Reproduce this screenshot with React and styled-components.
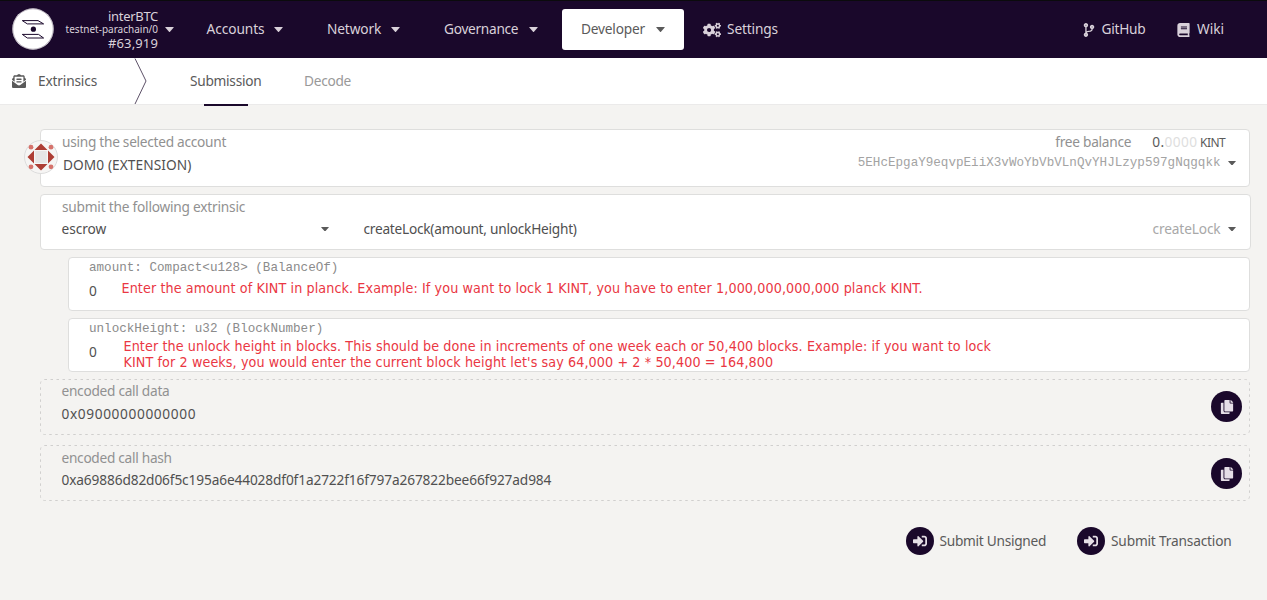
import React from 'react';
import styled, { createGlobalStyle } from 'styled-components';
import { FaEnvelopeOpenText, FaCodeBranch, FaBook, FaCogs, FaCopy, FaSignInAlt } from 'react-icons/fa';

const Global = createGlobalStyle`
  * { box-sizing: border-box; }
  body {
    margin: 0;
    background: #f4f3f1;
    color: #5a5a5a;
    font-family: "Noto Sans", sans-serif;
    font-size: 13.7px;
    line-height: 18px;
  }
`;

const Text = styled.span`
  display: block;
  flex: none;
  white-space: pre;
  width: ${p => (p.$w ? `${p.$w}px` : 'auto')};
  letter-spacing: ${p => p.$ls || 0}px;
  font-size: ${p => p.$size || 13.7}px;
`;

const Label = styled(Text)`
  color: #919191;
`;

const Faint = styled(Text)`
  color: #a8a8a8;
`;

const Mono = styled.span`
  display: block;
  flex: none;
  white-space: pre;
  font-family: "Liberation Mono", monospace;
  font-size: 12.6px;
  color: ${p => p.$color || '#8b8b8b'};
`;

const Header = styled.header`
  display: flex;
  align-items: center;
  height: 58px;
  padding: 1px 43px 0 12px;
  background: #1a082b;
  box-shadow: inset 0 1px #0b0b0d;
  color: #d9d1da;
`;

const Logo = styled.svg`
  flex: none;
  width: 42px;
  height: 42px;
  margin-bottom: 1px;
`;

const Chain = styled.div`
  display: flex;
  flex-direction: column;
  align-items: flex-end;
  width: 104px;
  margin-right: 7px;
  margin-top: 1px;
  line-height: 13.6px;
`;

const CaretSvg = styled.svg`
  flex: none;
  display: block;
  width: ${p => p.$size || 9}px;
  height: ${p => (p.$size || 9) * 0.55}px;
  fill: currentColor;
`;

const NavItem = styled.div`
  display: flex;
  align-items: center;
  flex: none;
  gap: ${p => p.$gap || 10}px;
  margin-left: ${p => p.$ml || 0}px;

  svg { flex: none; }
  ${Text} { margin-bottom: 2px; }
`;

const ActiveItem = styled(NavItem)`
  width: 122px;
  height: 41px;
  padding-left: 19px;
  border-radius: 3px;
  background: #fff;
  color: #5a5a5a;
`;

const Links = styled.div`
  display: flex;
  margin-left: auto;
`;

const Tabs = styled.nav`
  display: flex;
  height: 47px;
  padding-left: 12px;
  border-bottom: 1px solid #ebeaea;
  background: #fff;
`;

const Section = styled.div`
  display: flex;
  align-items: center;
  width: 122px;
  height: 46px;
  gap: 12px;
`;

const Divider = styled.svg`
  width: 13px;
  height: 46px;
`;

const Tab = styled.div`
  display: flex;
  flex-direction: column;
  align-items: center;
  height: 48px;
  margin-left: ${p => p.$ml}px;
  padding-top: 14px;
  color: ${p => (p.$active ? '#5a5a5a' : '#999')};

  &::after {
    content: '';
    width: 44px;
    height: 2px;
    margin-top: 14px;
    background: ${p => (p.$active ? '#1a082b' : 'transparent')};
  }
`;

const Main = styled.main`
  display: flex;
  flex-direction: column;
  padding: 24px 17px 0 40px;
`;

const Field = styled.section`
  position: relative;
  height: ${p => p.$h}px;
  margin-bottom: 7px;
  margin-right: ${p => p.$mr || 0}px;
  margin-left: ${p => (p.$indent ? 28 : 0)}px;
  padding: ${p => p.$pt}px 0 0 ${p => (p.$indent ? 20 : 21)}px;
  border: 1px solid #dededd;
  border-radius: 4px;
  background: #fff;
`;

const Output = styled.section`
  display: flex;
  justify-content: space-between;
  align-items: flex-start;
  height: 56px;
  margin-bottom: 10px;
  padding: 4px 8px 0 21.5px;
  position: relative;
`;

const DashedFrame = styled.svg`
  position: absolute;
  inset: 0;
  width: 100%;
  height: 100%;
  fill: none;
  stroke: #d0cfce;
  stroke-dasharray: 2.5 3.5;
`;

const Stack = styled.div`
  display: flex;
  flex-direction: column;
  gap: ${p => p.$gap}px;
  margin-top: ${p => p.$mt || 0}px;
`;

const Row = styled.div`
  display: flex;
  align-items: ${p => p.$align || 'center'};
  margin-top: ${p => p.$mt || 0}px;
  margin-left: ${p => p.$ml || 0}px;
`;

const End = styled.div`
  display: flex;
  align-items: center;
  gap: ${p => p.$gap || 0}px;
  margin-left: auto;
  margin-right: ${p => p.$mr}px;
`;

const Identicon = styled.svg`
  position: absolute;
  left: -17px;
  top: 10px;
  width: 34px;
  height: 34px;
`;

const Note = styled.div`
  margin-top: ${p => p.$mt || 0}px;
  margin-left: ${p => p.$ml}px;
  font-family: "DejaVu Sans Condensed", "DejaVu Sans", sans-serif;
  font-stretch: condensed;
  font-size: 14.2px;
  line-height: 16px;
  letter-spacing: ${p => p.$ls}px;
  white-space: pre;
  color: #ea3743;
`;

const Round = styled.div`
  display: flex;
  flex: none;
  align-items: center;
  justify-content: center;
  width: ${p => p.$size}px;
  height: ${p => p.$size}px;
  margin-top: ${p => p.$mt || 0}px;
  border-radius: 50%;
  background: #1a082b;
  color: #e6dfe7;
`;

const Actions = styled.div`
  display: flex;
  justify-content: flex-end;
  gap: 31px;
  margin-top: 16px;
  padding-right: 18.5px;
`;

const Action = styled.div`
  display: flex;
  align-items: center;
  gap: 6px;
`;

const Value = styled(Text)`
  margin-top: ${p => p.$mt || 0}px;
  margin-left: ${p => p.$ml || 0}px;
  color: #505050;
`;

const Decimals = styled(Text)`
  color: #dedede;
`;

const Unit = styled(Text)`
  margin-top: 2px;
  margin-bottom: -1px;
  margin-left: 2.5px;
`;

const Caret = ({ size }) => (
  <CaretSvg $size={size} viewBox="0 0 9 5"><path d="M.6 0h7.8q.8 0 .3.6L5 4.7q-.5.5-1 0L.3.6Q-.2 0 .6 0Z" /></CaretSvg>
);

const Menu = ({ label, w, ls, ml }) => (
  <NavItem $ml={ml}>
    <Text $w={w} $ls={ls}>{label}</Text>
    <Caret />
  </NavItem>
);

const Encoded = ({ label, labelLs, value, ls, gap, top, buttonTop }) => (
  <Output>
    <DashedFrame><rect x="0.5" y="0.5" width="1209" height="55" rx="4" /></DashedFrame>
    <Stack $gap={gap} $mt={top}>
      <Label $ls={labelLs}>{label}</Label>
      <Value $ls={ls}>{value}</Value>
    </Stack>
    <Round $size={31} $mt={buttonTop}><FaCopy size={14} /></Round>
  </Output>
);

export default function App() {
  return (
    <>
      <Global />
      <Header>
        <Logo viewBox="0 0 42 42">
          <circle cx="21" cy="21" r="20.7" fill="#fff" />
          <circle cx="21" cy="21" r="20.2" fill="none" stroke="#8b8292" strokeWidth=".6" />
          <g fill="none" stroke="#1a082b" strokeWidth="1" strokeLinejoin="round">
            <path d="M10.3 12.6H26l5.6 3.3H15.3Z" />
            <path d="M10.3 26.4H26.5l5.1 3.6H15.3Z" />
          </g>
          <circle cx="21.4" cy="21.2" r="2.6" fill="#1a082b" />
        </Logo>
        <Chain>
          <Text $size={13} $ls={-0.3}>interBTC</Text>
          <Text $size={10}>testnet-parachain/0</Text>
          <Text $size={13} $ls={0.13}>#63,919</Text>
        </Chain>
        <Caret />
        <Menu label="Accounts" w={57.5} ls={-0.06} ml={32.5} />
        <Menu label="Network" w={54} ls={-0.14} ml={44} />
        <Menu label="Governance" w={75} ls={-0.29} ml={44} />
        <ActiveItem $ml={24} $gap={11}>
          <Text $w={64} $ls={-0.19}>Developer</Text>
          <Caret />
        </ActiveItem>
        <NavItem $ml={19} $gap={6}>
          <FaCogs size={18} />
          <Text $w={51} $ls={-0.13}>Settings</Text>
        </NavItem>
        <Links>
          <NavItem $gap={6.5}>
            <FaCodeBranch size={14} style={{ width: 12 }} />
            <Text $w={44.5} $ls={-0.24}>GitHub</Text>
          </NavItem>
          <NavItem $ml={31} $gap={7}>
            <FaBook size={14} style={{ width: 13 }} />
            <Text $w={27} $ls={-0.03}>Wiki</Text>
          </NavItem>
        </Links>
      </Header>
      <Tabs>
        <Section>
          <FaEnvelopeOpenText size={14} />
          <Text $ls={-0.16}>Extrinsics</Text>
        </Section>
        <Divider viewBox="0 0 13 46">
          <path d="M1 .5 12 23 1 46" fill="none" stroke="#5d5168" strokeWidth="1" />
        </Divider>
        <Tab $ml={43} $active><Text $w={71.5} $ls={-0.27}>Submission</Text></Tab>
        <Tab $ml={42.5}><Text $w={47} $ls={-0.28}>Decode</Text></Tab>
      </Tabs>
      <Main>
        <Field $h={58} $pt={2}>
          <Identicon viewBox="0 0 34 34">
            <circle cx="17" cy="17" r="16.5" fill="#f6f5f4" stroke="#dcdcdc" />
            <path d="M17 3.5 23.5 10h-13ZM17 30.5 23.5 24h-13ZM3.5 17 10 10.5v13ZM30.5 17 24 10.5v13Z" fill="#ad3e35" />
            <rect x="11.2" y="11" width="11.6" height="12" fill="#e6e6e6" />
            <g fill="#d6736c">
              <circle cx="7" cy="7.2" r="2.4" /><circle cx="27" cy="7.2" r="2.4" />
              <circle cx="7" cy="26.8" r="2.4" /><circle cx="27" cy="26.8" r="2.4" />
            </g>
          </Identicon>
          <Row>
            <Label $ls={-0.28}>using the selected account</Label>
            <End $mr={23.5}>
              <Label $w={76} $ls={-0.26}>free balance</Label>
              <Row $ml={21}>
                <Text $ls={0.4}>0.</Text>
                <Decimals $ls={0.42}>0000</Decimals>
              </Row>
              <Unit $size={12} $ls={-0.55} $w={25.5}>KINT</Unit>
            </End>
          </Row>
          <Row $align="flex-start" $mt={3}>
            <Value $ls={0.08} $ml={1} $mt={2}>DOM0 (EXTENSION)</Value>
            <End $mr={13} $gap={7.5}>
              <Mono $color="#a3a3a3">5EHcEpgaY9eqvpEiiX3vWoYbVbVLnQvYHJLzyp597gNqgqkk</Mono>
              <Caret size={8} />
            </End>
          </Row>
        </Field>
        <Field $h={56} $pt={3} $mr={-1}>
          <Label $ls={-0.22}>submit the following extrinsic</Label>
          <Row $mt={4}>
            <Value $w={259.5} $ls={-0.07} $ml={-0.5}>escrow</Value>
            <Caret size={8} />
            <Value $ls={-0.25} $ml={34.5}>createLock(amount, unlockHeight)</Value>
            <End $mr={14} $gap={7.5}>
              <Faint $w={68} $ls={-0.13}>createLock</Faint>
              <Caret size={8} />
            </End>
          </Row>
        </Field>
        <Field $indent $h={54} $pt={1}>
          <Mono>{'amount: Compact<u128> (BalanceOf)'}</Mono>
          <Row $align="flex-start" $mt={3}>
            <Value $w={8} $mt={2}>0</Value>
            <Note $ml={24.5} $ls={0.1}>Enter the amount of KINT in planck. Example: If you want to lock 1 KINT, you have to enter 1,000,000,000,000 planck KINT.</Note>
          </Row>
        </Field>
        <Field $indent $h={54} $pt={1}>
          <Mono>unlockHeight: u32 (BlockNumber)</Mono>
          <Row $align="flex-start">
            <Value $w={8} $mt={5}>0</Value>
            <Note $ml={26.5} $ls={0.1}>
              {"Enter the unlock height in blocks. This should be done in increments of one week each or 50,400 blocks. Example: if you want to lock\nKINT for 2 weeks, you would enter the current block height let's say 64,000 + 2 * 50,400 = 164,800"}
            </Note>
          </Row>
        </Field>
        <Encoded label="encoded call data" labelLs={-0.28} value="0x09000000000000" ls={0.62} gap={5} top={-1} buttonTop={8} />
        <Encoded label="encoded call hash" labelLs={-0.29} value="0xa69886d82d06f5c195a6e44028df0f1a2722f16f797a267822bee66f927ad984" ls={-0.125} gap={4.5} top={-0.5} buttonTop={9} />
        <Actions>
          <Action><Round $size={28}><FaSignInAlt size={14} /></Round><Text $w={106.5} $ls={-0.28}>Submit Unsigned</Text></Action>
          <Action><Round $size={28}><FaSignInAlt size={14} /></Round><Text $w={120.5} $ls={-0.17}>Submit Transaction</Text></Action>
        </Actions>
      </Main>
    </>
  );
}
